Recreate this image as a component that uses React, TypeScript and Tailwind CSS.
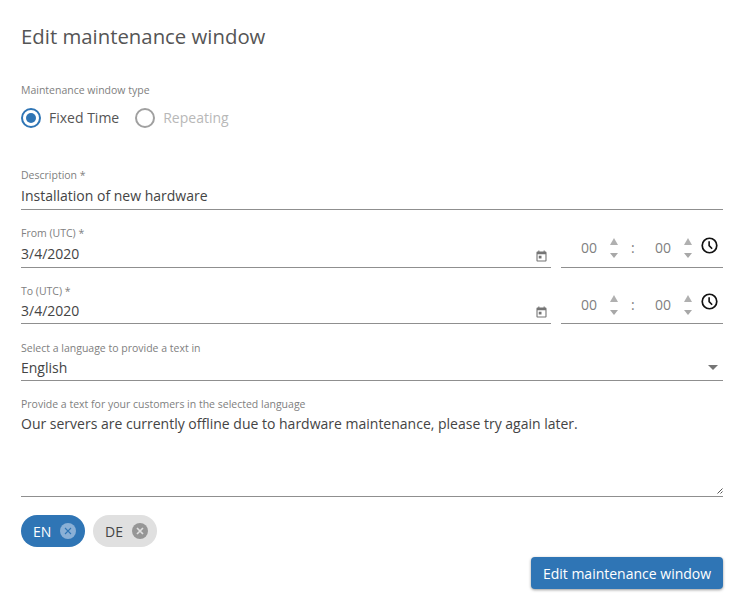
const font = "font-['Open_Sans',sans-serif]"

function Label({ children }: { children: string }) {
  return <div className="h-[14px] text-[10.5px] leading-[14px] text-[#808080]">{children}</div>
}

function Field({ label, value, className, boxClass = 'h-[28px]' }: { label: string; value: string; className?: string; boxClass?: string }) {
  return (
    <div className={className}>
      <Label>{label}</Label>
      <div className={`flex items-center border-b border-[#8f8f8f] text-[14px] text-[#444] ${boxClass}`}>{value}</div>
    </div>
  )
}

function CalendarIcon() {
  return (
    <svg width="11" height="12" viewBox="0 0 12 13" className="absolute bottom-[6px] right-[4px]" fill="#757575">
      <path d="M2.5 0.5h1.2v1.2h4.6V0.5h1.2v1.2h.8c.6 0 1.2.5 1.2 1.2v8.4c0 .7-.6 1.2-1.2 1.2H1.7c-.7 0-1.2-.5-1.2-1.2V2.9c0-.7.5-1.2 1.2-1.2h.8V0.5zM1.7 4.7v6.6h8.6V4.7H1.7z" />
      <rect x="3" y="6.2" width="3" height="3" />
    </svg>
  )
}

function Spinner() {
  return (
    <div className="flex w-[10px] flex-col items-center gap-[8px]">
      <div className="h-0 w-0 border-x-[4px] border-b-[7px] border-x-transparent border-b-[#b0b0b0]" />
      <div className="h-0 w-0 border-x-[4px] border-t-[5px] border-x-transparent border-t-[#a8a8a8]" />
    </div>
  )
}

function ClockIcon() {
  return (
    <svg width="17" height="17" viewBox="0 0 18 18" fill="none" stroke="#111" className="absolute right-[5px] top-[-3px]">
      <circle cx="9" cy="9" r="7.7" strokeWidth="1.8" />
      <path d="M8.6 4.4v4.8l3.2 3.2" strokeWidth="1.7" />
    </svg>
  )
}

function TimeField({ padClass }: { padClass: string }) {
  return (
    <div className={`relative flex h-[28px] w-[162px] items-center border-b border-[#8f8f8f] pl-[20px] text-[14px] text-[#808080] ${padClass}`}>
      <span className="mb-[2px] w-[16px]">00</span>
      <div className="ml-[12px]"><Spinner /></div>
      <span className="mb-[2px] ml-[12px] w-[4px]">:</span>
      <span className="mb-[2px] ml-[20px] w-[16px]">00</span>
      <div className="ml-[12px]"><Spinner /></div>
      <ClockIcon />
    </div>
  )
}

function DateRow({ label, className, boxClass, padClass }: { label: string; className?: string; boxClass?: string; padClass: string }) {
  return (
    <div className={`flex items-end gap-[10px] ${className ?? ''}`}>
      <div className="relative flex-1">
        <Field label={label} value="3/4/2020" boxClass={boxClass} />
        <CalendarIcon />
      </div>
      <TimeField padClass={padClass} />
    </div>
  )
}

function Radio({ label, checked }: { label: string; checked?: boolean }) {
  return (
    <div className="flex items-center gap-[8px]">
      <div className={`flex h-[20px] w-[20px] items-center justify-center rounded-full border-2 ${checked ? 'border-[#2f75b5]' : 'border-[#a0a0a0]'}`}>
        {checked && <div className="h-[10px] w-[10px] rounded-full bg-[#2f75b5]" />}
      </div>
      <span className={`text-[14px] ${checked ? 'text-[#555]' : 'text-[#b8b8b8]'}`}>{label}</span>
    </div>
  )
}

function Chip({ label, active }: { label: string; active?: boolean }) {
  return (
    <div className={`flex h-[32px] w-[64px] items-center rounded-full pl-[12px] text-[14px] ${active ? 'bg-[#2f75b5] text-white' : 'bg-[#e0e0e0] text-[#444]'}`}>
      <span className="w-[27px]">{label}</span>
      <svg width="16" height="16" viewBox="0 0 16 16">
        <circle cx="8" cy="8" r="8" fill={active ? '#8ab0d6' : '#969696'} />
        <path d="M5 5l6 6M11 5l-6 6" stroke={active ? '#2f75b5' : '#e0e0e0'} strokeWidth={active ? 1.1 : 1.7} />
      </svg>
    </div>
  )
}

export default function App() {
  return (
    <div className={`h-[597px] w-[744px] bg-white px-[21px] pt-[22px] ${font}`}>
      <h1 className="h-[29px] text-[20.35px] leading-[28px] text-[#555]">Edit maintenance window</h1>

      <div className="mt-[32px]"><Label>Maintenance window type</Label></div>
      <div className="mt-[10px] flex gap-[16px]">
        <Radio label="Fixed Time" checked />
        <Radio label="Repeating" />
      </div>

      <Field label="Description *" value="Installation of new hardware" className="mt-[40px]" />
      <DateRow label="From (UTC) *" className="mt-[16px]" padClass="pb-[11px]" />
      <DateRow label="To (UTC) *" className="mt-[16px]" boxClass="h-[26px]" padClass="pb-[9px]" />

      <div className="relative mt-[17px]">
        <Field label="Select a language to provide a text in" value="English" boxClass="h-[26px]" />
        <div className="absolute bottom-[11px] right-[5px] h-0 w-0 border-x-[5px] border-t-[5px] border-x-transparent border-t-[#757575]" />
      </div>

      <div className="relative mt-[16px]">
        <Label>Provide a text for your customers in the selected language</Label>
        <div className="h-[86px] border-b border-[#8f8f8f] pt-[3px] text-[14px] leading-[20px] text-[#444]">
          Our servers are currently offline due to hardware maintenance, please try again later.
        </div>
        <svg width="6" height="6" viewBox="0 0 6 6" stroke="#555" className="absolute bottom-[3px] right-0">
          <path d="M0.5 5.5l5-5M3.5 5.5l2-2" />
        </svg>
      </div>

      <div className="mt-[18px] flex gap-[8px]">
        <Chip label="EN" active />
        <Chip label="DE" />
      </div>

      <div className="mt-[10px] flex justify-end">
        <button className="h-[32px] w-[192px] rounded-[4px] bg-[#2f75b5] text-[14px] text-white shadow-[0_1px_3px_rgba(0,0,0,0.4)]">
          Edit maintenance window
        </button>
      </div>
    </div>
  )
}
